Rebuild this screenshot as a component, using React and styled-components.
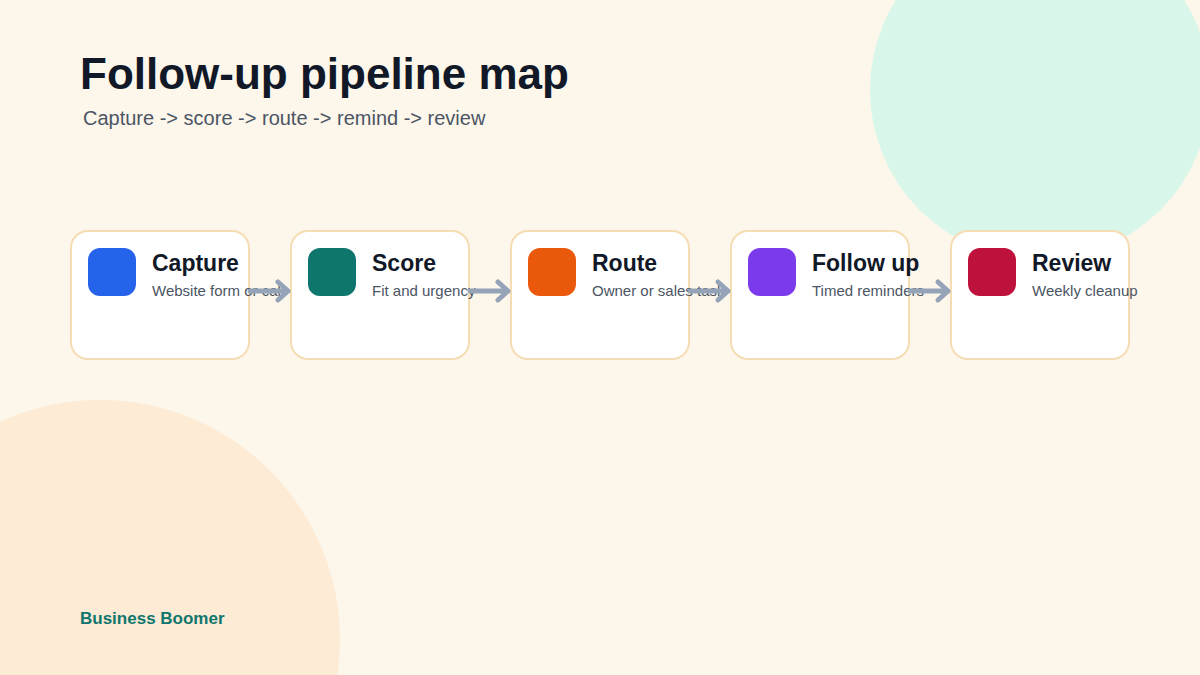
import React from "react";
import styled, { createGlobalStyle } from "styled-components";

const Global = createGlobalStyle`
  html, body { margin: 0; padding: 0; }
  body { font-family: "Liberation Sans", Arial, sans-serif; }
`;

const Page = styled.div`
  position: relative; width: 1200px; height: 675px; overflow: hidden;
  background: #fdf6eb; box-sizing: border-box; padding: 48px 80px 0;
  display: flex; flex-direction: column;
`;
const Blob = styled.div`
  position: absolute; border-radius: 50%;
  left: ${p => p.$x - p.$r}px; top: ${p => p.$y - p.$r}px;
  width: ${p => p.$r * 2}px; height: ${p => p.$r * 2}px; background: ${p => p.$c};
`;
const Title = styled.h1`
  position: relative; margin: 0; font-size: 44px; font-weight: 700; color: #111827; line-height: 52px;
`;
const Subtitle = styled.div`
  position: relative; margin: 4px 0 0 3px; font-size: 20px; color: #4b5563; line-height: 28px;
`;
const Row = styled.div`
  position: relative; display: flex; gap: 40px; margin: 98px 0 0 -10px;
`;
const Card = styled.div`
  position: relative; width: 180px; height: 130px; box-sizing: border-box;
  background: #fff; border: 2px solid #f6dcb5; border-radius: 18px;
  padding: 16px; display: flex; gap: 16px;
`;
const Icon = styled.div`
  flex: none; width: 48px; height: 48px; border-radius: 12px; background: ${p => p.$c};
`;
const Text = styled.div` white-space: nowrap; padding-top: 1px; `;
const CardTitle = styled.div` font-size: 23px; font-weight: 700; color: #111827; line-height: 28px; `;
const CardSub = styled.div` margin-top: 4px; font-size: 15px; color: #4b5563; line-height: 20px; `;
const Arrow = styled.svg`
  position: absolute; left: 176px; top: 47px; z-index: 2; overflow: visible;
`;
const Footer = styled.div`
  position: relative; margin-top: auto; margin-bottom: 46px;
  font-size: 17px; font-weight: 700; color: #0f766e;
`;

const steps = [
  ["Capture", "Website form or call", "#2563eb"],
  ["Score", "Fit and urgency", "#0f766e"],
  ["Route", "Owner or sales task", "#ea580c"],
  ["Follow up", "Timed reminders", "#7c3aed"],
  ["Review", "Weekly cleanup", "#be123c"],
];

export default function App() {
  return (
    <Page>
      <Global />
      <Blob $x={1040} $y={90} $r={170} $c="#d8f7ea" />
      <Blob $x={100} $y={640} $r={240} $c="#fdebd5" />
      <Title>Follow-up pipeline map</Title>
      <Subtitle>Capture -&gt; score -&gt; route -&gt; remind -&gt; review</Subtitle>
      <Row>
        {steps.map(([t, s, c], i) => (
          <Card key={t}>
            <Icon $c={c} />
            <Text>
              <CardTitle>{t}</CardTitle>
              <CardSub>{s}</CardSub>
            </Text>
            {i < steps.length - 1 && (
              <Arrow width="44" height="24" viewBox="0 0 44 24">
                <path d="M2 12H40M30 3L40 12L30 21" fill="none" stroke="#94a3b8" strokeWidth="5" strokeLinecap="round" strokeLinejoin="round" />
              </Arrow>
            )}
          </Card>
        ))}
      </Row>
      <Footer>Business Boomer</Footer>
    </Page>
  );
}
